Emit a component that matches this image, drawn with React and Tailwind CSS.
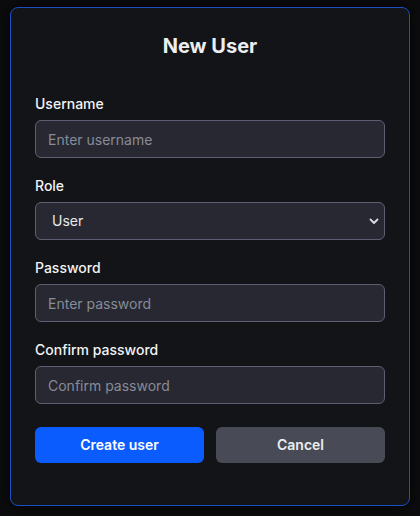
import { useState } from 'react'

const font = { fontFamily: 'Inter, "Noto Sans", sans-serif' }

function Field({ label, children }) {
  return (
    <div>
      <label className="block text-sm font-medium text-[#f2f3f5] mb-1.5">{label}</label>
      {children}
    </div>
  )
}

const inputClass =
  'w-full h-[38px] rounded-md border border-[#5c6072] bg-[#272831] px-3 text-sm text-[#e8e9ec] placeholder-[#878b97] outline-none'

export default function App() {
  const [form, setForm] = useState({ username: '', role: 'user', password: '', confirm: '' })

  return (
    <div className="min-h-screen w-full bg-[#0c0c0e] flex items-start justify-center pt-[7px]" style={font}>
      <div className="w-[400px] h-[499px] rounded-lg border border-[#1d4fc4] bg-[#131417] px-6 pt-6 shadow-[0_0_12px_rgba(0,0,0,0.8)]">
        <h2 className="text-xl font-bold text-[#eceef1] text-center leading-7 mb-[34px]">New User</h2>

        <div className="flex flex-col gap-[18px]">
          <Field label="Username">
            <input
              className={inputClass}
              placeholder="Enter username"
              value={form.username}
              onChange={e => setForm(f => ({ ...f, username: e.target.value }))}
            />
          </Field>

          <Field label="Role">
            <div className="relative">
              <select
                className={inputClass + ' appearance-none pl-4'}
                value={form.role}
                onChange={e => setForm(f => ({ ...f, role: e.target.value }))}
              >
                <option value="user">User</option>
                <option value="admin">Admin</option>
              </select>
              <svg
                className="absolute right-[5px] top-1/2 -translate-y-1/2 pointer-events-none"
                width="12"
                height="12"
                viewBox="0 0 12 12"
                fill="none"
              >
                <path d="M2.5 4.5L6 8l3.5-3.5" stroke="#d9dbe0" strokeWidth="1.8" strokeLinecap="round" strokeLinejoin="round" />
              </svg>
            </div>
          </Field>

          <Field label="Password">
            <input
              type="password"
              className={inputClass}
              placeholder="Enter password"
              value={form.password}
              onChange={e => setForm(f => ({ ...f, password: e.target.value }))}
            />
          </Field>

          <Field label="Confirm password">
            <input
              type="password"
              className={inputClass}
              placeholder="Confirm password"
              value={form.confirm}
              onChange={e => setForm(f => ({ ...f, confirm: e.target.value }))}
            />
          </Field>
        </div>

        <div className="grid grid-cols-2 gap-3 mt-[23px]">
          <button className="h-9 rounded-md bg-[#0b5cff] text-sm font-semibold text-white">Create user</button>
          <button className="h-9 rounded-md bg-[#484b55] text-sm font-semibold text-[#eceef1]">Cancel</button>
        </div>
      </div>
    </div>
  )
}
